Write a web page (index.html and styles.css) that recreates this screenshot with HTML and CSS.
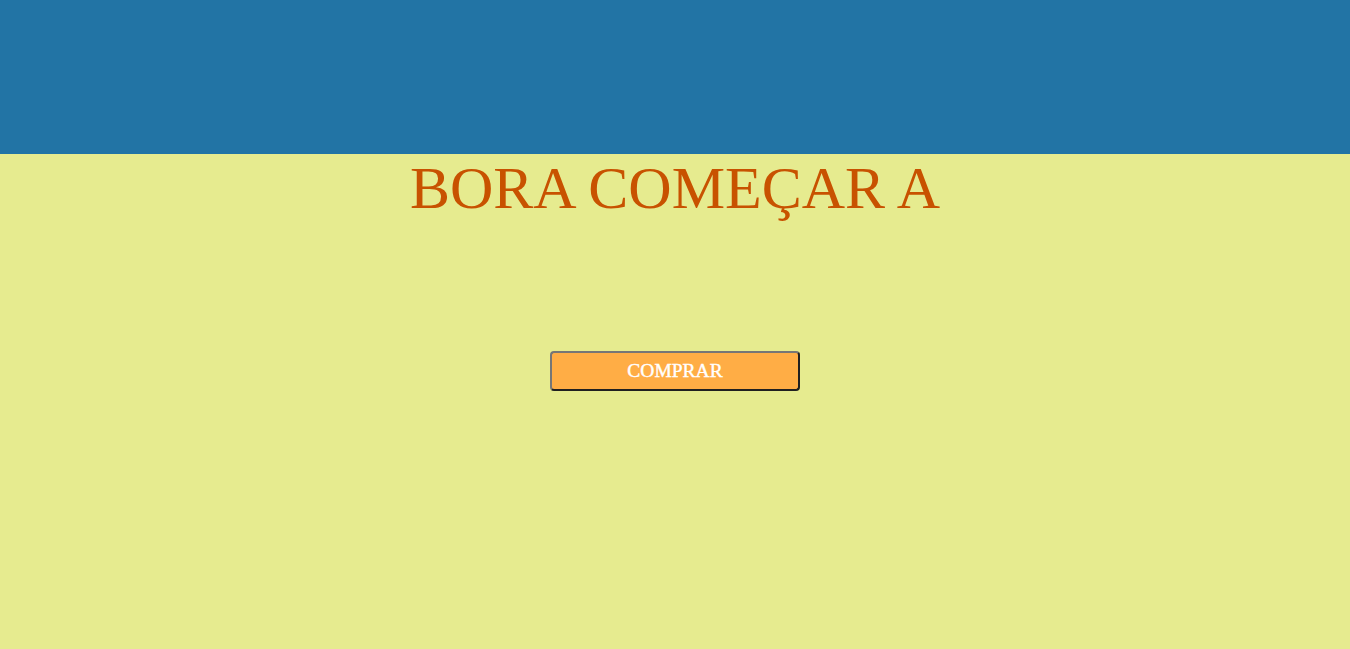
FILE: index.html
```html
<!DOCTYPE html>
<html lang="pt">
<head>
<meta charset="utf-8">
<title>Bora começar</title>
<link rel="stylesheet" href="styles.css">
</head>
<body>
<header class="topo"></header>
<main class="conteudo">
<h1 class="titulo">BORA COMEÇAR A</h1>
<button class="botao" type="button">COMPRAR</button>
</main>
</body>
</html>
```
FILE: styles.css
```css
html, body {
  margin: 0;
  padding: 0;
  height: 100%;
}
body {
  background: #e6eb8f;
  font-family: "Liberation Serif", "Times New Roman", serif;
}
.topo {
  height: 154px;
  background: #2274a5;
}
.conteudo {
  display: flex;
  flex-direction: column;
  align-items: center;
}
.titulo {
  margin: 0;
  font-size: 60px;
  font-weight: normal;
  color: #c85200;
  line-height: 69px;
}
.botao {
  margin-top: 128px;
  width: 250px;
  height: 40px;
  background: #ffad45;
  color: #ffffff;
  font-family: "Liberation Serif", "Times New Roman", serif;
  font-size: 19.5px;
  font-weight: normal;
  -webkit-text-stroke: 0.4px #ffffff;
  border: 2px solid #767676;
  border-color: #767676 #202020 #202020 #767676;
  border-radius: 4px;
  padding: 0;
}
```
